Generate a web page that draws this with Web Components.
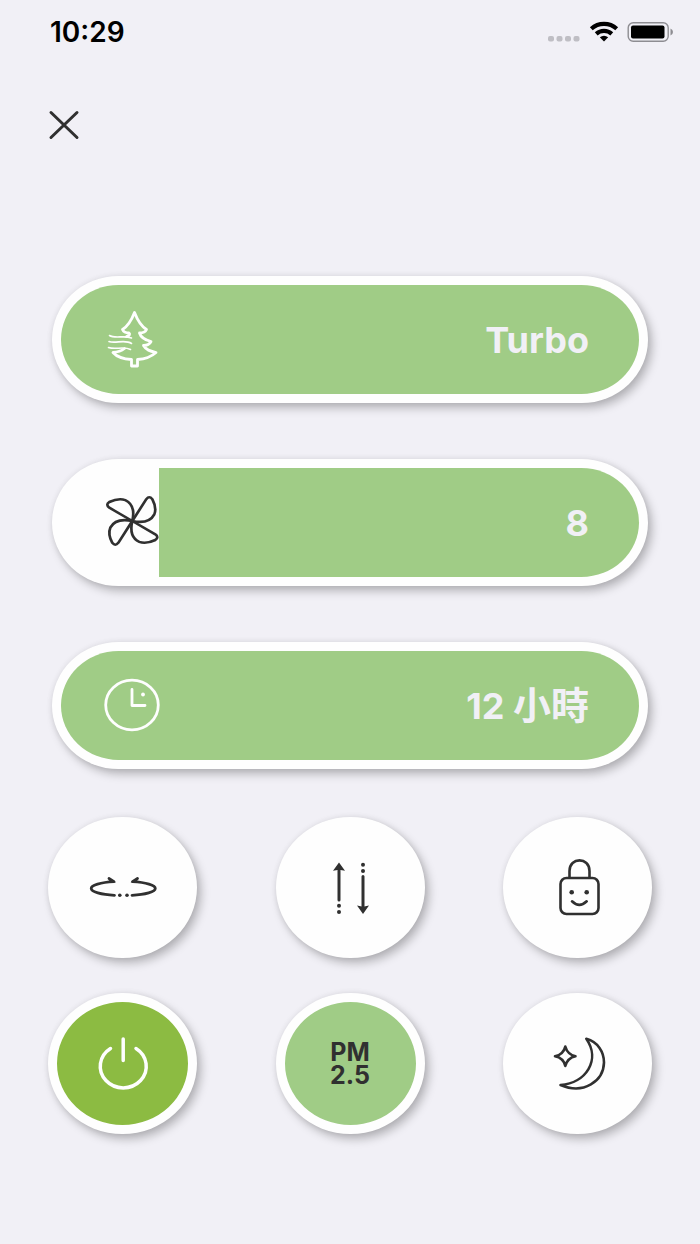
<!DOCTYPE html>
<html lang="zh-Hant">
<head>
<meta charset="utf-8">
<meta name="viewport" content="width=device-width, initial-scale=1">
<title>Air purifier</title>
<style>
  body {
    margin: 0;
    background: #f1f0f6;
    color: #303030;
    font-family: Inter, "Noto Sans CJK TC", sans-serif;
  }
</style>
</head>
<body>
<purifier-app></purifier-app>

<script>
const FAN_BLADE = 'M0 0 14 -23Q17 -27 20 -23C23 -17 24 -12 22 -7C18 1 9 2 0 0';

/**
 * Icon drawings. Pill icons use a 64 box, button icons an 80 box.
 */
const ICONS = {
  close: {
    box: '0 0 32 32',
    body: '<path d="M3 4.500 29 29.500M29 4.500 3 29.500" stroke-width="3"/>'
  },
  tree: {
    box: '0 0 64 64',
    body: `
      <path stroke-width="2.8" d="M26.500 28.500Q31 27 29 25Q24 25 22.500 21.500C28 18 32 11 34.500 4.500C37 11 41 18 46.500 21.500Q45 25 39.500 25C41 30 45 32 51 33.500Q49 37.500 43.500 37.500C46 42 50 43 56 44.500C51 49 46 51 37.500 51.500V58H31.500V51.500C22 51 17 49 13 44.500Q20 44 24.500 40.500"/>
      <path stroke-width="1.6" d="M9.500 27.500C15 31 24 27 31.500 30M9 33.500C15 36 25 31 31.500 35.500M8.500 39.500C15 42 24 38 30.500 41.500"/>`
  },
  fan: {
    box: '0 0 64 64',
    body: `
      <g transform="translate(32.3 30) scale(1 .95)" stroke-width="2.7">
        ${[0, 90, 180, 270].map(deg => `<path transform="rotate(${deg})" d="${FAN_BLADE}"/>`).join('')}
      </g>`
  },
  clock: {
    box: '0 0 64 64',
    body: `
      <ellipse cx="32" cy="31" rx="26.300" ry="24.800" stroke-width="2.800"/>
      <path stroke-width="2.800" d="M32 15.500V31.500H45"/>
      <circle cx="43" cy="20.500" r="1.900" fill="currentColor" stroke="none"/>`
  },
  swing: {
    box: '0 0 80 80',
    body: `
      <path stroke-width="2.800" d="M26 30.500 31 33.600A29 7 0 0 0 31.500 47.300M54.500 30.500 49.500 33.600A29 7 0 0 1 49 47.300"/>
      <path fill="currentColor" stroke="none" d="M25.500 29.500 33 34.500 27.500 34.500ZM55 29.500 47.500 34.500 53 34.500Z"/>
      <g fill="currentColor" stroke="none"><circle cx="36.800" cy="47.300" r="1.800"/><circle cx="44" cy="47.300" r="1.800"/></g>`
  },
  updown: {
    box: '0 0 80 80',
    body: `
      <path stroke-width="3" d="M29 20V52M53 28.500V61"/>
      <g fill="currentColor" stroke="none">
        <path d="M29 14.500 35 22.800 29 21.800 23 22.800ZM53 66 59 57.500 53 58.700 47 57.500Z"/>
        <circle cx="29" cy="57.700" r="2"/><circle cx="29" cy="64" r="2"/>
        <circle cx="53" cy="16.700" r="2"/><circle cx="53" cy="23" r="2"/>
      </g>`
  },
  lock: {
    box: '0 0 80 80',
    body: `
      <rect x="22.500" y="30" width="38" height="36" rx="6" stroke-width="2.600"/>
      <path stroke-width="2.600" d="M31.500 29.500V23C31.500 8.800 51.500 8.800 51.500 23V29.500M34 53.300Q41.300 60.500 48.700 53.300"/>
      <g fill="currentColor" stroke="none"><circle cx="33.700" cy="44.300" r="2.300"/><circle cx="48.700" cy="44.300" r="2.300"/></g>`
  },
  power: {
    box: '0 0 80 80',
    body: '<path stroke-width="3.500" d="M27.500 24.500A23 21.500 0 1 0 53 24.500M40.200 15V36.500"/>'
  },
  moon: {
    box: '0 0 80 80',
    body: `
      <path stroke-width="2.600" d="M48.300 14.800C60 18 66 28 66 38.500C65.500 57 46 71 22.500 61C48 59 63 36 48.300 14.800Z"/>
      <path stroke-width="2.600" d="M27.300 22.500Q29.500 30.500 37.500 32.300Q29.500 34 27.300 42Q25.500 34 17 32.300Q25.500 30.500 27.300 22.500Z"/>`
  },
  signal: {
    box: '0 0 34 24',
    body: `
      <g fill="#bfbec4" stroke="none">
        <rect x="1" y="16" width="6" height="5.500" rx="2"/><rect x="9.500" y="16" width="6" height="5.500" rx="2"/>
        <rect x="18" y="16" width="6" height="5.500" rx="2"/><rect x="26.500" y="16" width="6" height="5.500" rx="2"/>
      </g>`
  },
  wifi: {
    box: '0 0 30 24',
    body: `
      <g stroke="#000" stroke-width="4.200" stroke-linecap="butt">
        <path d="M2.300 8.700C9.500 2.200 20.500 2.200 27.700 8.700M7.200 13.900C11.700 9.900 18.300 9.900 22.800 13.900"/>
      </g>
      <path fill="#000" stroke="none" d="M10.800 17.300Q15 14 19.200 17.300L15 21.500Z"/>`
  },
  battery: {
    box: '0 0 48 24',
    body: `
      <rect x="1.200" y="2.700" width="40" height="18.600" rx="5" stroke="#8e8d92" stroke-width="1.400"/>
      <rect x="4" y="5.500" width="33.500" height="13" rx="2" fill="#000" stroke="none"/>
      <path fill="#8e8d92" stroke="none" d="M43.500 8.500Q46 9.500 46 12T43.500 15.500Z"/>`
  }
};

/**
 * ui-icon
 * Attributes:
 * - name: key in ICONS
 */
class UiIcon extends HTMLElement {
  constructor() {
    super();
    this.attachShadow({ mode: 'open' });
  }

  connectedCallback() {
    const icon = ICONS[this.getAttribute('name')];
    const [, , width, height] = icon.box.split(' ');
    this.shadowRoot.innerHTML = `
      <style>
        :host { display: block; flex: none; }
        svg { display: block; }
      </style>
      <svg width="${width}" height="${height}" viewBox="${icon.box}" fill="none"
        stroke="currentColor" stroke-linecap="round" stroke-linejoin="round"
        aria-hidden="true">${icon.body}</svg>
    `;
  }
}

/**
 * status-bar
 * Clock in the default slot, signal icons in the "icons" slot
 */
class StatusBar extends HTMLElement {
  constructor() {
    super();
    this.attachShadow({ mode: 'open' }).innerHTML = `
      <style>
        :host {
          display: flex;
          align-items: center;
          justify-content: space-between;
          height: 64px;
          padding: 0 25px 0 50px;
          color: #000;
          font-size: 28px;
          font-weight: 600;
          line-height: 32px;
        }
        .icons { display: flex; gap: 8px; }
      </style>
      <slot></slot>
      <div class="icons"><slot name="icons"></slot></div>
    `;
  }
}

/**
 * pill-slider
 * Attributes:
 * - label: accessible name
 * - min, max, value: range of the slider
 * - partial: leave the icon side of the track unfilled
 */
class PillSlider extends HTMLElement {
  constructor() {
    super();
    this.attachShadow({ mode: 'open' });
  }

  connectedCallback() {
    const label = this.getAttribute('label');
    const text = this.textContent.trim();
    this.shadowRoot.innerHTML = `
      <style>
        :host { display: block; }
        .pill {
          position: relative;
          display: flex;
          padding: 9px;
          border-radius: 67px / 64px;
          background: #fefefe;
          box-shadow: 4px 5px 10px rgba(0, 0, 0, .25), 0 0 6px rgba(0, 0, 0, .07);
        }
        .track {
          flex: 1;
          display: flex;
          align-items: center;
          justify-content: space-between;
          min-height: 109px;
          padding: 0 50px 0 39px;
          border-radius: 58px / 55px;
          background: #a0cc86;
          color: #fefefe;
        }
        :host([partial]) .track {
          background: linear-gradient(to right, transparent 98px, #a0cc86 98px);
          color: #303030;
        }
        .value {
          color: #f1f0f6;
          font-size: 36px;
          font-weight: 700;
          line-height: 44px;
        }
        ::slotted(.unit) { font-size: 38px; }
        input {
          position: absolute;
          inset: 0;
          width: 100%;
          height: 100%;
          margin: 0;
          opacity: 0;
          cursor: pointer;
        }
        .pill:focus-within { outline: 2px solid #8cbb42; }
      </style>
      <div class="pill">
        <div class="track">
          <slot name="icon"></slot>
          <label class="value" for="range"><slot></slot></label>
        </div>
        <input id="range" type="range" aria-label="${label}" aria-valuetext="${text}"
          min="${this.getAttribute('min') || 0}"
          max="${this.getAttribute('max')}"
          value="${this.getAttribute('value')}">
      </div>
    `;
  }
}

/**
 * round-button
 * Attributes:
 * - label: accessible name
 * - tone: "power" or "air" for a filled face
 */
class RoundButton extends HTMLElement {
  constructor() {
    super();
    this.attachShadow({ mode: 'open' });
  }

  connectedCallback() {
    this.shadowRoot.innerHTML = `
      <style>
        :host { display: block; }
        button {
          display: flex;
          align-items: center;
          justify-content: center;
          box-sizing: border-box;
          width: 149px;
          height: 141px;
          padding: 0;
          border: 9px solid #fefefe;
          border-radius: 50%;
          background: #fefefe;
          box-shadow: 4px 5px 10px rgba(0, 0, 0, .25), 0 0 6px rgba(0, 0, 0, .07);
          color: #303030;
          font: inherit;
          font-size: 25px;
          font-weight: 700;
          line-height: 23px;
          cursor: pointer;
        }
        :host([tone="power"]) button { background: #8cbb42; color: #fefefe; }
        :host([tone="air"]) button { background: #a0cc86; }
      </style>
      <button type="button" aria-label="${this.getAttribute('label')}"><slot></slot></button>
    `;
  }
}

/**
 * purifier-app
 * The whole remote control screen
 */
class PurifierApp extends HTMLElement {
  constructor() {
    super();
    this.attachShadow({ mode: 'open' });
  }

  connectedCallback() {
    this.shadowRoot.innerHTML = `
      <style>
        :host { display: block; min-height: 100vh; }
        header { padding: 44px 48px 0; }
        .close {
          display: block;
          padding: 0;
          border: 0;
          background: none;
          color: #303030;
          cursor: pointer;
        }
        main { padding: 136px 48px 48px; }
        .sliders {
          display: grid;
          gap: 56px;
          margin: 0 4px 48px;
        }
        .buttons {
          display: grid;
          grid-template-columns: repeat(3, auto);
          justify-content: space-between;
          row-gap: 35px;
        }
      </style>
      <status-bar>
        <time>10:29</time>
        <ui-icon slot="icons" name="signal"></ui-icon>
        <ui-icon slot="icons" name="wifi"></ui-icon>
        <ui-icon slot="icons" name="battery"></ui-icon>
      </status-bar>
      <header>
        <button class="close" type="button" aria-label="Close"><ui-icon name="close"></ui-icon></button>
      </header>
      <main>
        <div class="sliders">
          <pill-slider label="Mode" max="4" value="4">
            <ui-icon slot="icon" name="tree"></ui-icon>Turbo
          </pill-slider>
          <pill-slider label="Fan speed" max="10" value="8" partial>
            <ui-icon slot="icon" name="fan"></ui-icon>8
          </pill-slider>
          <pill-slider label="Timer" max="12" value="12">
            <ui-icon slot="icon" name="clock"></ui-icon>12 <span class="unit">小時</span>
          </pill-slider>
        </div>
        <div class="buttons">
          <round-button label="Swing"><ui-icon name="swing"></ui-icon></round-button>
          <round-button label="Up and down"><ui-icon name="updown"></ui-icon></round-button>
          <round-button label="Child lock"><ui-icon name="lock"></ui-icon></round-button>
          <round-button label="Power" tone="power"><ui-icon name="power"></ui-icon></round-button>
          <round-button label="PM 2.5" tone="air">PM<br>2.5</round-button>
          <round-button label="Sleep"><ui-icon name="moon"></ui-icon></round-button>
        </div>
      </main>
    `;
  }
}

customElements.define('ui-icon', UiIcon);
customElements.define('status-bar', StatusBar);
customElements.define('pill-slider', PillSlider);
customElements.define('round-button', RoundButton);
customElements.define('purifier-app', PurifierApp);
</script>
</body>
</html>
